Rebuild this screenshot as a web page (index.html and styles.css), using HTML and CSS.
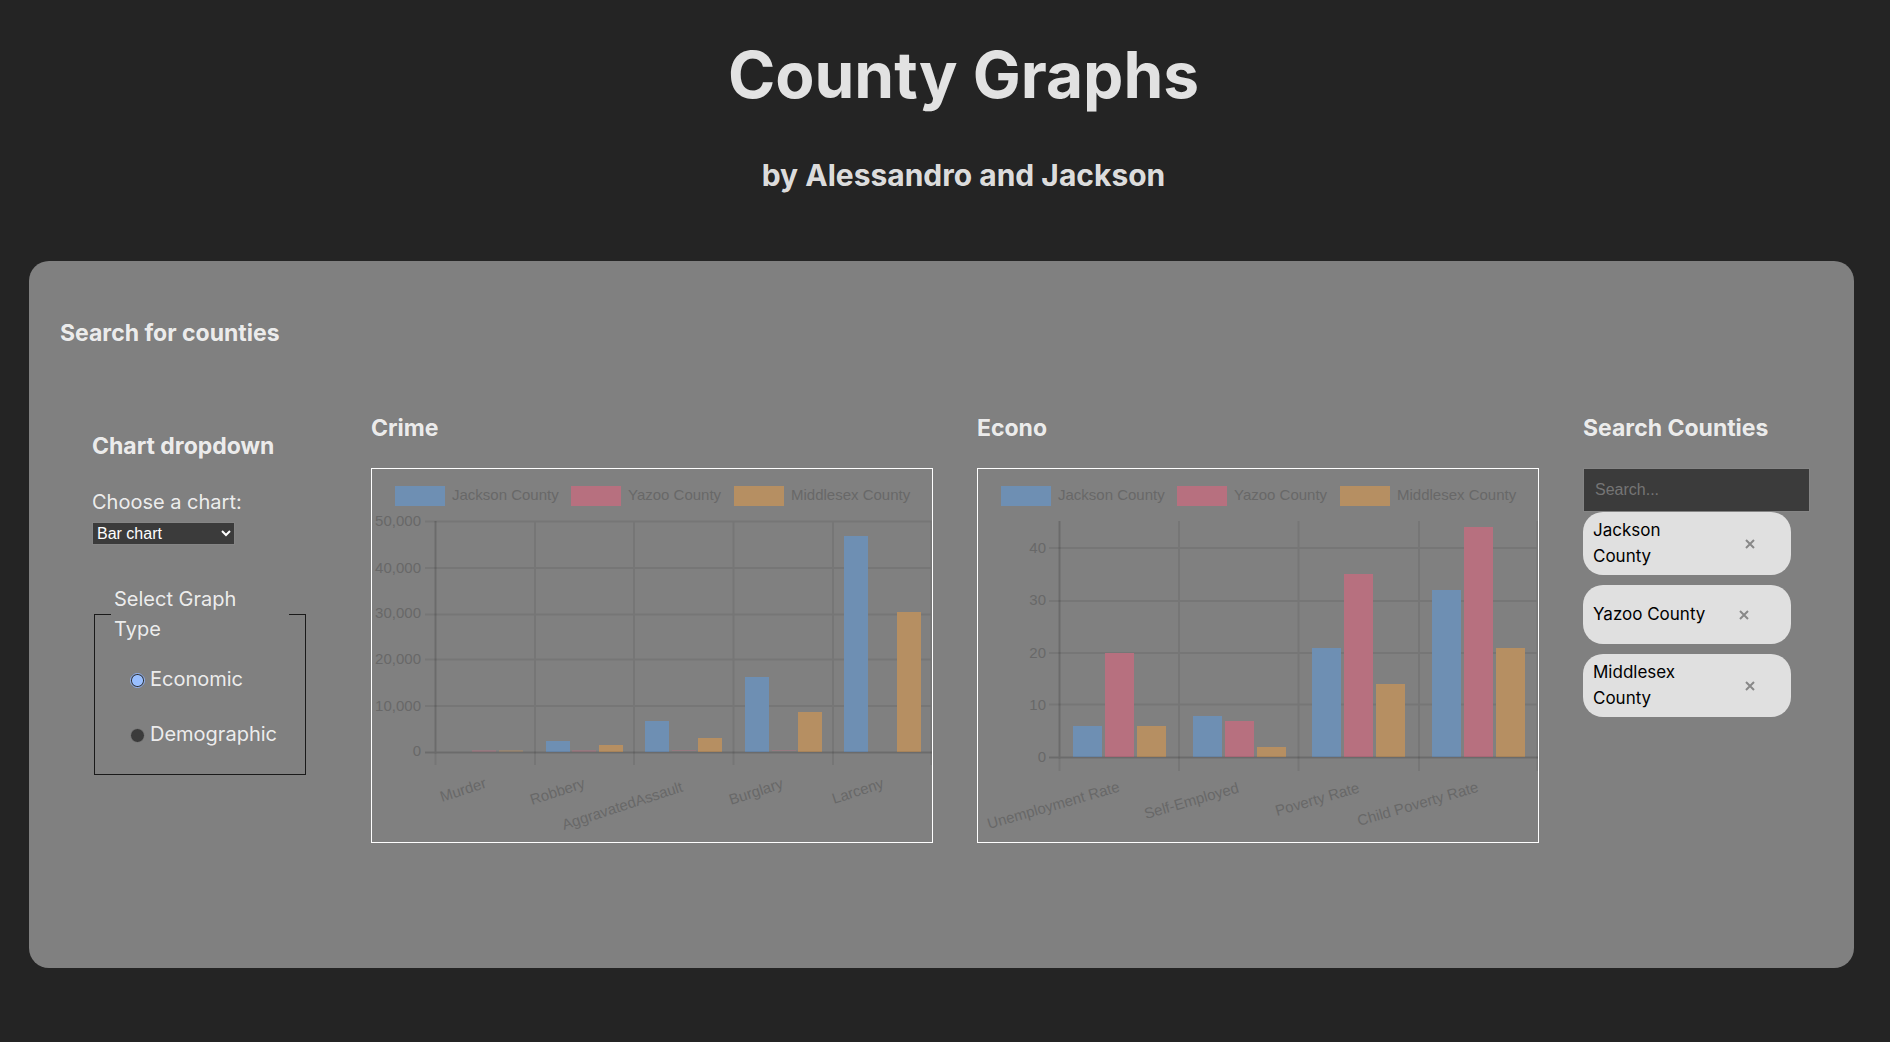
FILE: index.html
```html
<!DOCTYPE html>
<html lang="en">
<head>
<meta charset="utf-8">
<title>County Graphs</title>
<link rel="stylesheet" href="styles.css">
</head>
<body>
<header class="page-header">
  <h1>County Graphs</h1>
  <h2>by Alessandro and Jackson</h2>
</header>
<main class="panel">
  <h3>Search for counties</h3>
  <div class="columns">
    <section class="options">
      <h3>Chart dropdown</h3>
      <label class="field-label" for="chart-type">Choose a chart:</label>
      <select id="chart-type" class="chart-select">
        <option>Bar chart</option>
        <option>Line chart</option>
      </select>
      <fieldset class="graph-type">
        <legend>Select Graph Type</legend>
        <div class="radio-list">
          <label class="radio-row"><input type="radio" name="graph-type" checked><span>Economic</span></label>
          <label class="radio-row"><input type="radio" name="graph-type"><span>Demographic</span></label>
        </div>
      </fieldset>
    </section>

    <section>
      <h3>Crime</h3>
      <svg class="chart" viewBox="0 0 560 373" role="img" aria-label="Crime by county">
        <g class="blue"><rect x="23" y="17" width="50" height="20"/></g>
        <g class="pink"><rect x="199" y="17" width="50" height="20"/></g>
        <g class="orange"><rect x="362" y="17" width="50" height="20"/></g>
        <text x="80" y="31">Jackson County</text>
        <text x="256" y="31">Yazoo County</text>
        <text x="419" y="31">Middlesex County</text>
        <path class="grid" d="M53 52.5H560M53 99H560M53 145.5H560M53 190.5H560M53 237H560M163 52V296M262 52V296M361.500 52V296M461 52V296M559.500 52V296M63.500 284V296"/>
        <g class="blue">
          <rect x="174" y="272" width="24" height="11"/>
          <rect x="273" y="252" width="24" height="31"/>
          <rect x="373" y="208" width="24" height="75"/>
          <rect x="472" y="67" width="24" height="216"/>
        </g>
        <g class="pink faint">
          <rect x="100" y="281" width="24" height="2"/>
          <rect x="200" y="281" width="24" height="2"/>
          <rect x="300" y="281" width="24" height="1"/>
          <rect x="400" y="281" width="24" height="1"/>
        </g>
        <g class="orange faint"><rect x="127" y="281" width="24" height="2"/></g>
        <g class="orange">
          <rect x="227" y="276" width="24" height="7"/>
          <rect x="326" y="269" width="24" height="14"/>
          <rect x="426" y="243" width="24" height="40"/>
          <rect x="525" y="143" width="24" height="140"/>
        </g>
        <path class="axis" d="M53 283.500H560M63.500 52V284"/>
        <g class="y-labels">
          <text x="49" y="57">50,000</text>
          <text x="49" y="104">40,000</text>
          <text x="49" y="149">30,000</text>
          <text x="49" y="195">20,000</text>
          <text x="49" y="242">10,000</text>
          <text x="49" y="287">0</text>
        </g>
        <text transform="translate(70 333) rotate(-18)">Murder</text>
        <text transform="translate(160 336) rotate(-18)">Robbery</text>
        <text transform="translate(192 361) rotate(-18)">AggravatedAssault</text>
        <text transform="translate(359 336) rotate(-18)">Burglary</text>
        <text transform="translate(462 335) rotate(-18)">Larceny</text>
      </svg>
    </section>

    <section>
      <h3>Econo</h3>
      <svg class="chart" viewBox="0 0 560 373" role="img" aria-label="Economy by county">
        <g class="blue"><rect x="23" y="17" width="50" height="20"/></g>
        <g class="pink"><rect x="199" y="17" width="50" height="20"/></g>
        <g class="orange"><rect x="362" y="17" width="50" height="20"/></g>
        <text x="80" y="31">Jackson County</text>
        <text x="256" y="31">Yazoo County</text>
        <text x="419" y="31">Middlesex County</text>
        <path class="grid" d="M71 79H560M71 132H560M71 184H560M71 235.500H560M201 52V302M320.500 52V302M441 52V302M559.500 52V302M81.500 289V302"/>
        <g class="blue">
          <rect x="95" y="257" width="29" height="31"/>
          <rect x="215" y="247" width="29" height="41"/>
          <rect x="334" y="179" width="29" height="109"/>
          <rect x="454" y="121" width="29" height="167"/>
        </g>
        <g class="pink">
          <rect x="127" y="184" width="29" height="104"/>
          <rect x="247" y="252" width="29" height="36"/>
          <rect x="366" y="105" width="29" height="183"/>
          <rect x="486" y="58" width="29" height="230"/>
        </g>
        <g class="orange">
          <rect x="159" y="257" width="29" height="31"/>
          <rect x="279" y="278" width="29" height="10"/>
          <rect x="398" y="215" width="29" height="73"/>
          <rect x="518" y="179" width="29" height="109"/>
        </g>
        <path class="axis" d="M71 288.500H560M81.500 52V289"/>
        <g class="y-labels">
          <text x="68" y="84">40</text>
          <text x="68" y="136">30</text>
          <text x="68" y="189">20</text>
          <text x="68" y="241">10</text>
          <text x="68" y="293">0</text>
        </g>
        <text transform="translate(11 360) rotate(-16)">Unemployment Rate</text>
        <text transform="translate(168 350) rotate(-16)">Self-Employed</text>
        <text transform="translate(299 347) rotate(-16)">Poverty Rate</text>
        <text transform="translate(381 357) rotate(-16)">Child Poverty Rate</text>
      </svg>
    </section>

    <section>
      <h3><label for="county-search">Search Counties</label></h3>
      <input id="county-search" class="search" type="text" placeholder="Search...">
      <ul class="chips">
        <li><span>Jackson County</span><button type="button" aria-label="Remove Jackson County"><svg viewBox="0 0 10 10"><path d="M1 1L9 9M9 1L1 9"/></svg></button></li>
        <li><span>Yazoo County</span><button type="button" aria-label="Remove Yazoo County"><svg viewBox="0 0 10 10"><path d="M1 1L9 9M9 1L1 9"/></svg></button></li>
        <li><span>Middlesex County</span><button type="button" aria-label="Remove Middlesex County"><svg viewBox="0 0 10 10"><path d="M1 1L9 9M9 1L1 9"/></svg></button></li>
      </ul>
    </section>
  </div>
</main>
</body>
</html>
```
FILE: styles.css
```css
* { box-sizing: border-box; }

body {
  margin: 0;
  background: #242424;
  color: rgba(255, 255, 255, 0.87);
  color-scheme: dark;
  font: 20px/30px Inter, sans-serif;
}

h1, h2, h3 { margin: 0; font-weight: 700; }
h1 { font-size: 64px; line-height: 70px; }
h2 { font-size: 30px; line-height: 45px; }
h3 { font-size: 23px; line-height: 35px; }

.page-header {
  display: grid;
  gap: 43px;
  padding: 40px 0 63px 37px;
  text-align: center;
}

.panel {
  margin: 0 36px 0 29px;
  padding: 55px 44px 125px 31px;
  border-radius: 20px;
  background: #808080;
}

.columns {
  display: grid;
  grid-template-columns: 235px 1fr 1fr 227px;
  gap: 44px;
  align-items: start;
  padding: 60px 0 0 32px;
}
.columns h3 { margin-bottom: 22px; }

.options { padding-top: 18px; }
.options .field-label { display: block; padding-top: 1px; }

.chart-select {
  display: block;
  width: 143px;
  height: 23px;
  margin-top: 5px;
  border: 1px solid #858585;
  border-radius: 0;
  background-color: #3b3b3b;
  color: #fff;
  font: 16px "Liberation Sans", sans-serif;
}

.graph-type {
  width: 212px;
  margin: 39px 2px 0;
  padding: 20px 16px 25px;
  border: 1px solid #1a1a1a;
}
.graph-type legend { width: 178px; padding: 0 3px; }

.radio-list { display: grid; gap: 25px; padding-left: 19px; }
.radio-row { display: flex; align-items: center; gap: 5px; }
.radio-row input {
  appearance: none;
  width: 15px;
  height: 15px;
  margin: 2px 0 0;
  border: 1px solid #808080;
  border-radius: 50%;
  background: #3b3b3b;
}
.radio-row input:checked {
  border-color: #8fb2f5;
  background: radial-gradient(circle, #99bfff 5px, #303030 6px);
}

.chart { display: block; width: 100%; border: 1px solid #fff; }
.chart text {
  fill: #686868;
  font: 15px "Liberation Sans", sans-serif;
}
.y-labels { text-anchor: end; }
.grid { fill: none; stroke: #000; stroke-opacity: 0.08; stroke-width: 2; }
.axis { fill: none; stroke: #000; stroke-opacity: 0.16; stroke-width: 2; }
.blue { fill: #6d90b5; }
.pink { fill: #b96f7f; }
.orange { fill: #b89061; }
.faint { opacity: 0.4; }
.blue, .pink, .orange { fill-opacity: 0.96; }

.search {
  display: block;
  width: 100%;
  height: 44px;
  padding: 0 11px;
  border: 1px solid #858585;
  background: #3b3b3b;
  color: #fff;
  font: 16px "Liberation Sans", sans-serif;
}
.search::placeholder { color: #757575; }

.chips {
  display: grid;
  gap: 10px;
  width: 208px;
  margin: 0;
  padding: 0;
  list-style: none;
}
.chips li {
  display: flex;
  align-items: center;
  padding: 5px 10px 6px;
  border-radius: 20px;
  background: #e0e0e0;
  color: #000;
  font-size: 17px;
  line-height: 26px;
}
.chips button {
  flex: none;
  width: 62px;
  height: 48px;
  margin-left: 8px;
  padding: 3px 0 0;
  border: 0;
  background: none;
}
.chips svg {
  width: 10px;
  height: 10px;
  fill: none;
  stroke: #888;
  stroke-width: 2;
}
```
